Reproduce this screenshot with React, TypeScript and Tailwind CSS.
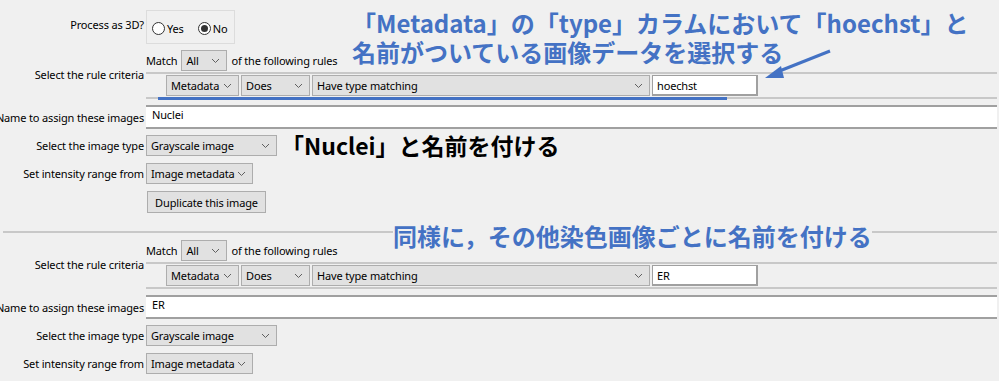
import React from "react";

const Chevron = () => (
  <svg width="9" height="6" viewBox="0 0 9 6" className="shrink-0">
    <path d="M1 1 L4.5 4.5 L8 1" fill="none" stroke="#606060" strokeWidth="1" />
  </svg>
);

const Select = ({ text, w }: { text: string; w: string }) => (
  <div
    className={`${w} h-[21px] shrink-0 flex items-center justify-between pl-[4px] pr-[6px] bg-[#e1e1e1] border border-[#adadad]`}
  >
    <span className="whitespace-nowrap">{text}</span>
    <Chevron />
  </div>
);

const Label = ({ children }: { children: React.ReactNode }) => (
  <div className="w-[144px] shrink-0 flex justify-end">
    <span className="whitespace-nowrap">{children}</span>
  </div>
);

const Radio = ({ checked }: { checked?: boolean }) => (
  <span className="w-[13px] h-[13px] rounded-full border border-[#333] bg-white flex items-center justify-center shrink-0">
    {checked && <span className="w-[7px] h-[7px] rounded-full bg-[#333]" />}
  </span>
);

const RuleBlock = ({ value }: { value: string }) => (
  <div className="flex items-center">
    <Label>Select the rule criteria</Label>
    <div className="ml-[2px] flex-1 mr-[2px] flex flex-col">
      <div className="flex items-center h-[21px]">
        <span className="mr-[4px]">Match</span>
        <Select text="All" w="w-[46px]" />
        <span className="ml-[4px]">of the following rules</span>
      </div>
      <div className="mt-[1px] border-t-2 border-b-2 border-[#c8c8c8] pl-[20px] py-[1px] flex items-center gap-[2px]">
        <Select text="Metadata" w="w-[73px]" />
        <Select text="Does" w="w-[69px]" />
        <Select text="Have type matching" w="w-[338px]" />
        <div className="w-[106px] h-[21px] bg-white border border-[#a0a0a0] border-r-2 border-b-2 flex items-center pl-[4px]">
          {value}
        </div>
      </div>
    </div>
  </div>
);

const ImageFields = ({ name }: { name: string }) => (
  <>
    <div className="flex items-center mt-[6px]">
      <Label>Name to assign these images</Label>
      <div className="ml-[2px] mr-[2px] flex-1 h-[24px] bg-white border-t-2 border-b-2 border-[#a0a0a0] flex items-start pl-[6px] pt-[2px]">
        {name}
      </div>
    </div>
    <div className="flex items-center mt-[6px]">
      <Label>Select the image type</Label>
      <div className="ml-[2px]">
        <Select text="Grayscale image" w="w-[131px]" />
      </div>
    </div>
    <div className="flex items-center mt-[7px]">
      <Label>Set intensity range from</Label>
      <div className="ml-[2px]">
        <Select text="Image metadata" w="w-[107px]" />
      </div>
    </div>
  </>
);

export default function App() {
  return (
    <div
      className="relative w-[999px] h-[381px] overflow-hidden bg-[#f0f0f0] text-[11px] tracking-[-0.15px] text-black leading-none"
      style={{ fontFamily: '"Noto Sans", "Liberation Sans", sans-serif' }}
    >
      <div className="pt-[10px]">
        <div className="flex items-start">
          <div className="w-[144px] shrink-0 flex justify-end pt-[9px]">
            <span className="whitespace-nowrap">Process as 3D?</span>
          </div>
          <div className="ml-[2px] w-[89px] h-[34px] border border-[#dcdcdc] flex items-center pl-[5px] pt-[2px]">
            <Radio />
            <span className="ml-[2px] mr-[14px]">Yes</span>
            <Radio checked />
            <span className="ml-[2px]">No</span>
          </div>
        </div>
        <div className="mt-[6px]">
          <RuleBlock value="hoechst" />
        </div>
        <ImageFields name="Nuclei" />
        <div className="ml-[147px] mt-[7px] w-[119px] h-[22px] bg-[#e1e1e1] border border-[#adadad] flex items-center justify-center">
          Duplicate this image
        </div>
        <div className="mt-[18px] ml-[3px] mr-[2px] border-t-2 border-[#c8c8c8]" />
        <div className="mt-[7px]">
          <RuleBlock value="ER" />
        </div>
        <ImageFields name="ER" />
      </div>

      {/* annotations */}
      <div className="absolute left-[158px] top-[97px] w-[569px] h-[3px] bg-[#4472c4]" />
      <div
        className="absolute left-[352px] top-[8px] text-[24px] font-bold tracking-normal text-[#4472c4] leading-[29px] whitespace-nowrap"
        style={{ fontFamily: '"Noto Sans CJK JP", sans-serif' }}
      >
        <div>「Metadata」の「type」カラムにおいて「hoechst」と</div>
        <div>名前がついている画像データを選択する</div>
      </div>
      <svg className="absolute left-[755px] top-[45px]" width="85" height="40" viewBox="0 0 85 40">
        <line x1="75" y1="6" x2="22" y2="27" stroke="#4472c4" strokeWidth="3" />
        <polygon points="10,33 26,21 29,33" fill="#4472c4" />
      </svg>
      <div
        className="absolute left-[281px] top-[131px] text-[23px] font-bold tracking-normal text-black leading-[29px] whitespace-nowrap"
        style={{ fontFamily: '"Noto Sans CJK JP", sans-serif' }}
      >
        「Nuclei」と名前を付ける
      </div>
      <div
        className="absolute left-[393px] top-[221px] text-[24px] font-bold tracking-normal text-[#4472c4] leading-[29px] whitespace-nowrap bg-[#f0f0f0]"
        style={{ fontFamily: '"Noto Sans CJK JP", sans-serif' }}
      >
        同様に，その他染色画像ごとに名前を付ける
      </div>
    </div>
  );
}
